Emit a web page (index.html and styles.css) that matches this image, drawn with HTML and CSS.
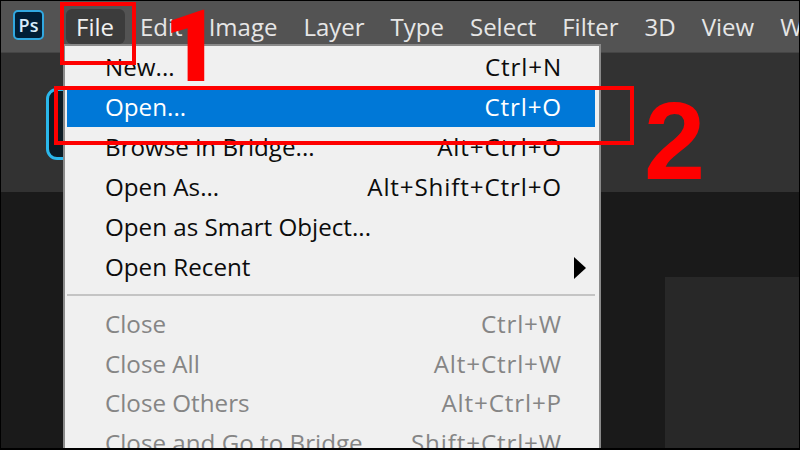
FILE: index.html
```html
<!DOCTYPE html>
<html lang="en">
<head>
<meta charset="utf-8">
<title>Photoshop File menu</title>
<link rel="stylesheet" href="styles.css">
</head>
<body>
<div class="app">
  <header class="menubar">
    <div class="logo"><span>Ps</span></div>
    <nav class="menus">
      <span class="menu-title active">File</span>
      <span class="menu-title">Edit</span>
      <span class="menu-title">Image</span>
      <span class="menu-title">Layer</span>
      <span class="menu-title">Type</span>
      <span class="menu-title">Select</span>
      <span class="menu-title">Filter</span>
      <span class="menu-title">3D</span>
      <span class="menu-title">View</span>
      <span class="menu-title">Window</span>
    </nav>
  </header>
  <div class="options"></div>
  <div class="workspace"></div>

  <div class="home-button"></div>
  <div class="panel"></div>

  <div class="dropdown">
    <div class="item"><span>New...</span><span class="keys">Ctrl+N</span></div>
    <div class="item selected"><span>Open...</span><span class="keys">Ctrl+O</span></div>
    <div class="item"><span>Browse in Bridge...</span><span class="keys">Alt+Ctrl+O</span></div>
    <div class="item"><span>Open As...</span><span class="keys">Alt+Shift+Ctrl+O</span></div>
    <div class="item"><span>Open as Smart Object...</span></div>
    <div class="item"><span>Open Recent</span><i class="arrow"></i></div>
    <div class="separator"></div>
    <div class="item off"><span>Close</span><span class="keys">Ctrl+W</span></div>
    <div class="item off"><span>Close All</span><span class="keys">Alt+Ctrl+W</span></div>
    <div class="item off"><span>Close Others</span><span class="keys">Alt+Ctrl+P</span></div>
    <div class="item off"><span>Close and Go to Bridge...</span><span class="keys">Shift+Ctrl+W</span></div>
  </div>

  <div class="mark mark-file"></div>
  <div class="mark mark-open"></div>
  <div class="digit digit-1">1</div>
  <div class="digit digit-2">2</div>
</div>
</body>
</html>
```

FILE: styles.css
```css
* { box-sizing: border-box; }
html, body { margin: 0; padding: 0; }
body { width: 800px; height: 450px; overflow: hidden; background: #1a1a1a; font-family: "Open Sans", "Noto Sans", sans-serif; }

.app { position: relative; width: 800px; height: 450px; overflow: hidden; display: flex; flex-direction: column; border: 1px solid #000; border-bottom-width: 2px; }

.menubar { flex: none; height: 51px; background: #535353; display: flex; align-items: center; padding-left: 12px; white-space: nowrap; }
.logo { flex: none; width: 31px; height: 30px; margin-top: -4px; border: 2px solid #31a8e0; border-radius: 5px; background: #001e36; color: #d6ecfb; font-size: 18px; font-weight: 600; display: flex; align-items: center; justify-content: center; }
.menus { display: flex; margin-left: 22px; margin-top: -1px; align-items: center; }
.menu-title { color: #e6e6e6; font-size: 24px; line-height: 35px; padding: 0 10px; margin-right: 6px; }
.menu-title.active { width: 59px; margin-right: 5px; background: #3c3c3c; border-radius: 6px; color: #f0f0f0; }

.options { flex: none; height: 140px; background: #323232; border-top: 1px solid #454545; }
.workspace { flex: 1; background: #1a1a1a; }

.home-button { position: absolute; left: 45px; top: 87px; width: 40px; height: 72px; border: 3px solid #2bb8ec; border-radius: 11px; background: #0c1b24; }
.panel { position: absolute; left: 664px; top: 276px; width: 136px; height: 174px; background: #282828; }

.dropdown { position: absolute; left: 62px; top: 43px; width: 538px; height: 420px; background: #f0f0f0; border: 2px solid #8a8a8a; border-bottom: 0; padding: 2px 4px 0 2px; color: #0c0c0c; font-size: 24.2px; }
.item { height: 40px; display: flex; justify-content: space-between; align-items: center; padding: 0 33px 4px 38px; white-space: nowrap; }
.item.selected { height: 38px; margin: 1px 0; background: #0078d7; color: #fff; }
.item.off { height: 39.6px; color: #858585; }
.keys { letter-spacing: .85px; }
.arrow { width: 0; height: 0; margin: 4px -24px 0 0; border-left: 12px solid #000; border-top: 11px solid transparent; border-bottom: 11px solid transparent; }
.separator { height: 2px; background: #c4c4c4; margin: 6px 0 10px; }

.mark { position: absolute; border: 4px solid #fe0000; }
.mark-file { left: 59px; top: 1px; width: 76px; height: 63px; }
.mark-open { left: 53px; top: 85px; width: 580px; height: 59px; }
.digit { position: absolute; color: #fe0000; font-weight: 700; line-height: 1; }
.digit-1 { left: 162px; top: -5px; font-family: Roboto, "Liberation Sans", sans-serif; font-weight: 900; font-size: 101px; }
.digit-2 { left: 643px; top: 85px; font-family: "Liberation Sans", Arial, sans-serif; font-size: 110px; }
```
